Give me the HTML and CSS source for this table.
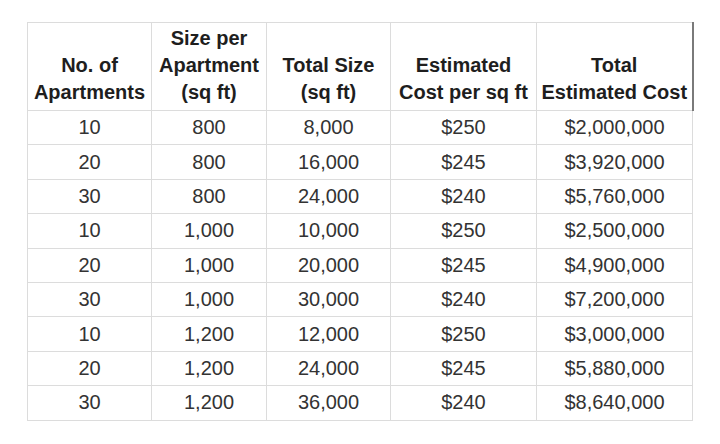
FILE: index.html
```html
<!DOCTYPE html>
<html>
<head>
<meta charset="utf-8">
<link rel="stylesheet" href="styles.css">
</head>
<body>
<div class="page">
<table class="cost-table">
  <colgroup>
    <col class="c1"><col class="c2"><col class="c3"><col class="c4"><col class="c5">
  </colgroup>
  <thead>
    <tr>
      <th>No. of<br>Apartments</th>
      <th>Size per<br>Apartment<br>(sq ft)</th>
      <th>Total Size<br>(sq ft)</th>
      <th>Estimated<br>Cost per sq ft</th>
      <th class="last">Total<br>Estimated Cost</th>
    </tr>
  </thead>
  <tbody>
    <tr><td>10</td><td>800</td><td>8,000</td><td>$250</td><td>$2,000,000</td></tr>
    <tr><td>20</td><td>800</td><td>16,000</td><td>$245</td><td>$3,920,000</td></tr>
    <tr><td>30</td><td>800</td><td>24,000</td><td>$240</td><td>$5,760,000</td></tr>
    <tr><td>10</td><td>1,000</td><td>10,000</td><td>$250</td><td>$2,500,000</td></tr>
    <tr><td>20</td><td>1,000</td><td>20,000</td><td>$245</td><td>$4,900,000</td></tr>
    <tr><td>30</td><td>1,000</td><td>30,000</td><td>$240</td><td>$7,200,000</td></tr>
    <tr><td>10</td><td>1,200</td><td>12,000</td><td>$250</td><td>$3,000,000</td></tr>
    <tr><td>20</td><td>1,200</td><td>24,000</td><td>$245</td><td>$5,880,000</td></tr>
    <tr><td>30</td><td>1,200</td><td>36,000</td><td>$240</td><td>$8,640,000</td></tr>
  </tbody>
</table>
</div>
</body>
</html>
```

FILE: styles.css
```css
html, body {
  margin: 0;
  padding: 0;
  background: #ffffff;
}

.page {
  padding: 22px 0 0 27px;
}

.cost-table {
  border-collapse: collapse;
  table-layout: fixed;
  width: 665px;
  font-family: "Liberation Sans", Arial, sans-serif;
  font-size: 20px;
  color: #333333;
}

.c1 { width: 124px; }
.c2 { width: 115px; }
.c3 { width: 124px; }
.c4 { width: 146px; }
.c5 { width: 156px; }

.cost-table th,
.cost-table td {
  border: 1px solid #dcdcdc;
  text-align: center;
  padding: 0;
  white-space: nowrap;
}

.cost-table th {
  font-weight: bold;
  color: #1e1e1e;
  line-height: 27px;
  height: 88px;
  vertical-align: bottom;
  padding: 2px 0 4px;
  box-sizing: border-box;
}

.cost-table th.last {
  border-right: 2px solid #7a7a7a;
}

.cost-table td {
  height: 34.4px;
  line-height: 23px;
  vertical-align: middle;
  box-sizing: border-box;
}
```
